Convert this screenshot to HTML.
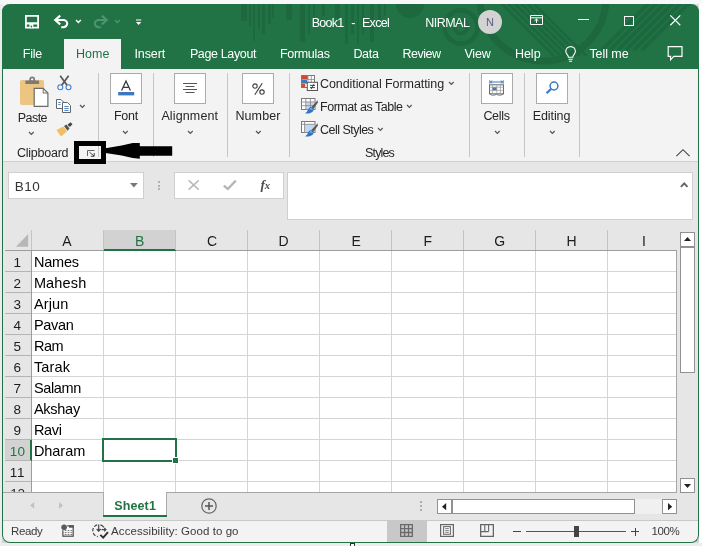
<!DOCTYPE html>
<html><head><meta charset="utf-8"><title>Excel</title>
<style>

*{box-sizing:border-box;margin:0;padding:0}
html,body{width:702px;height:546px;overflow:hidden;background:#f6f6f6;font-family:"Liberation Sans",sans-serif;position:relative}
.a{position:absolute}
.t{position:absolute;white-space:pre;line-height:1}
svg{position:absolute;overflow:visible}
#win{position:absolute;left:2px;top:4px;width:697px;height:539px;background:#f3f3f3;border-radius:8px;overflow:hidden}
#wb{position:absolute;left:2px;top:4px;width:697px;height:539px;border-radius:8px;border:1.5px solid #217346;border-top:none}
.sep{position:absolute;width:1px;background:#c6c6c6;top:73px;height:84px}
.bb{position:absolute;width:32px;height:31px;background:#fff;border:1px solid #ababab;top:73px}
.wbx{position:absolute;background:#fff;border:1px solid #cfcfcf}
.vl{position:absolute;top:251px;width:1px;height:241px;background:#d4d4d4}
.hl{position:absolute;left:32px;height:1px;width:644px;background:#d4d4d4}
.hs{position:absolute;top:230px;width:1px;height:20px;background:#c3c3c3}
.rs{position:absolute;left:5px;width:26px;height:1px;background:#b4b4b4}

</style></head><body>
<div class="a" style="left:0;top:0;width:702px;height:4px;background:#f8f8f8"></div>
<div class="a" style="left:0;top:4px;width:3px;height:542px;background:#ececec"></div>
<div class="a" style="left:699px;top:4px;width:3px;height:542px;background:#fff"></div>
<div class="a" style="left:0;top:543px;width:702px;height:3px;background:#ededed"></div>
<div class="a" style="left:350px;top:543px;width:5px;height:5px;background:#fff;border:1px solid #333"></div>
<div class="a" style="left:692px;top:4px;width:7px;height:7px;background:#dcdcdc"></div><div class="a" style="left:2px;top:536px;width:7px;height:7px;background:#d2d2d2"></div><div class="a" style="left:692px;top:536px;width:7px;height:7px;background:#d2d2d2"></div>
<div id="win"></div>
<div class="a" style="left:2px;top:4px;width:697px;height:539px;border-radius:8px;overflow:hidden;will-change:transform"><div class="a" style="left:-2px;top:-4px;width:702px;height:546px">
<div class="a" style="left:0;top:0;width:702px;height:69px;background:#217346"></div>
<svg class="a" style="left:0;top:0" width="702" height="69" viewBox="0 0 702 69"><g fill="#1d683e" stroke="none"><rect x="241" y="4" width="6" height="17"/><rect x="249" y="4" width="2" height="22"/><rect x="253" y="4" width="2" height="37"/><rect x="258" y="4" width="2" height="25"/><rect x="262" y="4" width="3" height="30"/><rect x="268" y="4" width="3" height="20"/><rect x="272" y="4" width="2" height="14"/><rect x="286" y="4" width="6" height="16"/><rect x="300" y="4" width="5" height="38"/><rect x="308" y="4" width="2" height="30"/><rect x="313" y="4" width="2" height="16"/><rect x="322" y="4" width="3" height="12"/><rect x="335" y="4" width="5" height="14"/><rect x="345" y="4" width="3" height="40"/><rect x="351" y="4" width="3" height="30"/><rect x="357" y="4" width="2" height="40"/><rect x="362" y="4" width="2" height="30"/><rect x="370" y="4" width="4" height="38"/><rect x="378" y="4" width="3" height="18"/><rect x="384" y="4" width="2" height="12"/><circle cx="410" cy="4" r="14"/></g><g fill="none" stroke="#1d683e"><circle cx="461" cy="27" r="16.5" stroke-width="4.5"/><circle cx="461" cy="27" r="6.5" stroke-width="4"/><circle cx="543" cy="-2" r="63" stroke-width="7"/><path d="M498.0 0 L554.0 56" stroke-width="2.6"/><path d="M504.5 0 L560.5 56" stroke-width="2.6"/><path d="M511.0 0 L567.0 56" stroke-width="2.6"/><path d="M517.5 0 L573.5 56" stroke-width="2.6"/><path d="M524.0 0 L580.0 56" stroke-width="2.6"/><path d="M530.5 0 L586.5 56" stroke-width="2.6"/><path d="M652 0 L602 50" stroke-width="3.8"/><path d="M660 0 L610 50" stroke-width="3.8"/><path d="M668 0 L618 50" stroke-width="3.8"/><path d="M676 0 L626 50" stroke-width="3.8"/><path d="M684 0 L634 50" stroke-width="3.8"/><path d="M692 0 L642 50" stroke-width="3.8"/></g></svg>
<div class="a" style="left:64px;top:39px;width:57px;height:31px;background:#f3f3f3"></div>
<div class="a" style="left:0;top:69px;width:702px;height:93px;background:#f3f3f3;border-bottom:1px solid #d0d0d0"></div>
<div class="a" style="left:0;top:162px;width:702px;height:359px;background:#e6e6e6"></div>
<svg class="a" style="left:25px;top:15px" width="14" height="13.6" viewBox="0 0 14 13.6"><path d="M0.9 0.9 H13.1 V12.7 H0.9 Z" fill="none" stroke="#fff" stroke-width="1.8"/><path d="M0.9 8.3 H13.1" stroke="#fff" stroke-width="2.3"/><rect x="4.4" y="9" width="3.9" height="4.2" fill="#fff"/><rect x="5.7" y="10.6" width="1.4" height="1.8" fill="#217346"/></svg>
<svg class="a" style="left:54px;top:15px" width="15" height="13" viewBox="0 0 15 13"><path d="M6.2 0.6 L1.2 5 L6.2 9.4 M1.5 5 H9.2 A4 3.6 0 0 1 9.2 12.2 H7.2" fill="none" stroke="#fff" stroke-width="2.1"/></svg>
<svg class="a" style="left:75.8px;top:19.8px" width="4.8" height="2.5" viewBox="0 0 4.8 2.5"><path d="M0 0 L2.4 2.5 L4.8 0" fill="none" stroke="#fff" stroke-width="1.4"/></svg>
<svg class="a" style="left:92.5px;top:15px" width="15" height="13" viewBox="0 0 15 13"><path d="M8.8 0.6 L13.8 5 L8.8 9.4 M13.5 5 H5.8 A4 3.6 0 0 0 5.8 12.2 H7.8" fill="none" stroke="#4f9470" stroke-width="2.1"/></svg>
<svg class="a" style="left:115px;top:19.8px" width="4.8" height="2.5" viewBox="0 0 4.8 2.5"><path d="M0 0 L2.4 2.5 L4.8 0" fill="none" stroke="#4f9470" stroke-width="1.4"/></svg>
<svg class="a" style="left:135.9px;top:19px" width="5.3" height="6.5" viewBox="0 0 6 6.5"><path d="M0 0.7 H6" stroke="#fff" stroke-width="1.3"/><path d="M0 3 H6 L3 6.3 Z" fill="#fff"/></svg>
<div class="a" style="left:478px;top:10px;width:24px;height:24px;border-radius:50%;background:#d3d3d3"></div>
<svg class="a" style="left:529.8px;top:15.2px" width="13" height="10" viewBox="0 0 13 10"><path d="M0.5 0.5 H12.5 V9.5 H0.5 Z M0.5 2.8 H12.5" fill="none" stroke="#fff" stroke-width="1"/><path d="M6.5 8 V4.2 M4.6 5.8 L6.5 4 L8.4 5.8" fill="none" stroke="#fff" stroke-width="1"/></svg>
<div class="a" style="left:577.5px;top:19px;width:11px;height:1.2px;background:#fff"></div>
<div class="a" style="left:623.5px;top:15.5px;width:10.5px;height:10.5px;border:1.2px solid #fff"></div>
<svg class="a" style="left:669.5px;top:14.8px" width="10.6" height="10.6" viewBox="0 0 10.6 10.6"><path d="M0.3 0.3 L10.3 10.3 M10.3 0.3 L0.3 10.3" stroke="#fff" stroke-width="1.2"/></svg>
<svg class="a" style="left:564.8px;top:45.6px" width="11.2" height="16" viewBox="0 0 11 16"><path d="M3.3 11.2 C3.3 9 0.7 8 0.7 5.2 A4.8 4.6 0 0 1 10.3 5.2 C10.3 8 7.7 9 7.7 11.2 Z M3.4 13.3 H7.6 M4 15.3 H7" fill="none" stroke="#fff" stroke-width="1.1"/></svg>
<svg class="a" style="left:666.8px;top:45.6px" width="16.2" height="15" viewBox="0 0 15 15"><path d="M0.6 0.6 H14.4 V10.4 H6.2 L3 13.8 V10.4 H0.6 Z" fill="none" stroke="#fff" stroke-width="1.2"/></svg>
<div class="sep" style="left:98px"></div>
<div class="sep" style="left:153px"></div>
<div class="sep" style="left:227px"></div>
<div class="sep" style="left:289px"></div>
<div class="sep" style="left:469px"></div>
<div class="sep" style="left:524px"></div>
<div class="sep" style="left:579px"></div>
<div class="bb" style="left:110px"></div>
<div class="bb" style="left:174px"></div>
<div class="bb" style="left:242px"></div>
<div class="bb" style="left:481px"></div>
<div class="bb" style="left:536px"></div>
<svg class="a" style="left:29.3px;top:131.5px" width="4.7" height="2.5" viewBox="0 0 4.7 2.5"><path d="M0 0 L2.35 2.5 L4.7 0" fill="none" stroke="#555" stroke-width="1.2"/></svg>
<svg class="a" style="left:80.3px;top:105.1px" width="4.7" height="2.5" viewBox="0 0 4.7 2.5"><path d="M0 0 L2.35 2.5 L4.7 0" fill="none" stroke="#555" stroke-width="1.2"/></svg>
<svg class="a" style="left:123.3px;top:130.5px" width="4.7" height="2.5" viewBox="0 0 4.7 2.5"><path d="M0 0 L2.35 2.5 L4.7 0" fill="none" stroke="#555" stroke-width="1.2"/></svg>
<svg class="a" style="left:187.8px;top:130.5px" width="4.7" height="2.5" viewBox="0 0 4.7 2.5"><path d="M0 0 L2.35 2.5 L4.7 0" fill="none" stroke="#555" stroke-width="1.2"/></svg>
<svg class="a" style="left:255.5px;top:130.5px" width="4.7" height="2.5" viewBox="0 0 4.7 2.5"><path d="M0 0 L2.35 2.5 L4.7 0" fill="none" stroke="#555" stroke-width="1.2"/></svg>
<svg class="a" style="left:494.8px;top:130.5px" width="4.7" height="2.5" viewBox="0 0 4.7 2.5"><path d="M0 0 L2.35 2.5 L4.7 0" fill="none" stroke="#555" stroke-width="1.2"/></svg>
<svg class="a" style="left:549.8px;top:130.5px" width="4.7" height="2.5" viewBox="0 0 4.7 2.5"><path d="M0 0 L2.35 2.5 L4.7 0" fill="none" stroke="#555" stroke-width="1.2"/></svg>
<svg class="a" style="left:448.7px;top:82.3px" width="4.7" height="2.5" viewBox="0 0 4.7 2.5"><path d="M0 0 L2.35 2.5 L4.7 0" fill="none" stroke="#555" stroke-width="1.2"/></svg>
<svg class="a" style="left:406.90000000000003px;top:105.3px" width="4.7" height="2.5" viewBox="0 0 4.7 2.5"><path d="M0 0 L2.35 2.5 L4.7 0" fill="none" stroke="#555" stroke-width="1.2"/></svg>
<svg class="a" style="left:378.0px;top:128.3px" width="4.7" height="2.5" viewBox="0 0 4.7 2.5"><path d="M0 0 L2.35 2.5 L4.7 0" fill="none" stroke="#555" stroke-width="1.2"/></svg>
<svg class="a" style="left:675.5px;top:148.8px" width="14" height="7.5" viewBox="0 0 14 7.5"><path d="M0.4 7.2 L7 0.7 L13.6 7.2" fill="none" stroke="#444" stroke-width="1.1"/></svg>
<svg class="a" style="left:20px;top:76px" width="29" height="32" viewBox="0 0 29 32"><rect x="0" y="4" width="24.1" height="25" rx="2" fill="#ecc583"/><circle cx="12.2" cy="3.4" r="2.1" fill="none" stroke="#7a7a7a" stroke-width="1.7"/><rect x="5.3" y="4.4" width="13.8" height="3.5" rx="0.6" fill="#7a7a7a"/><path d="M14.2 12.3 H23.2 L27.9 17 V30.4 H14.2 Z" fill="#fff" stroke="#6a6a6a" stroke-width="1.2"/><path d="M23.2 12.3 V17 H27.9" fill="none" stroke="#6a6a6a" stroke-width="1"/></svg>
<svg class="a" style="left:57px;top:75px" width="15" height="16" viewBox="0 0 15 16"><path d="M3.2 0.8 L10.6 11 M11.6 0.8 L4.2 11" stroke="#5a5a5a" stroke-width="1.8" fill="none"/><circle cx="3.3" cy="12.3" r="2.5" fill="#f3f3f3" stroke="#3f7fc8" stroke-width="1.1"/><circle cx="11.5" cy="12.3" r="2.5" fill="#f3f3f3" stroke="#3f7fc8" stroke-width="1.1"/></svg>
<svg class="a" style="left:56px;top:99px" width="16" height="14" viewBox="0 0 16 14"><path d="M0.5 0.5 H5 L7.5 3 V9.5 H0.5 Z" fill="#fff" stroke="#666" stroke-width="1"/><path d="M6.5 3.5 H11.5 L14.5 6.5 V13.5 H6.5 Z" fill="#fff" stroke="#666" stroke-width="1"/><path d="M8.3 7.5 H12.7 M8.3 9.5 H12.7 M8.3 11.5 H12.7 M2.2 3.5 H4.6 M2.2 5.5 H4.6" stroke="#3f7fc8" stroke-width="0.9"/></svg>
<svg class="a" style="left:56px;top:121.5px" width="17" height="15" viewBox="0 0 17 15"><path d="M0.5 8 L7.5 4.5 L11 9.5 L5 14.5 Z" fill="#f0c060"/><path d="M8 4 L10.5 2.5 L13.5 6.5 L11.5 8.8 Z" fill="#555"/><path d="M11.5 2.8 L14.5 0.3 L16.5 2.2 L13.8 5 Z" fill="#444"/></svg>
<svg class="a" style="left:118px;top:80px" width="17" height="17" viewBox="0 0 17 17"><path d="M3.6 10.6 L8 1 L12.4 10.6 M5.2 7.3 H10.8" fill="none" stroke="#3a3a3a" stroke-width="1.3"/><rect x="0.2" y="12" width="16" height="3.4" fill="#3b78c4"/></svg>
<svg class="a" style="left:182.5px;top:83px" width="14" height="10" viewBox="0 0 14 10"><path d="M0 0.5 H14 M2.5 3.5 H11.5 M0 6.5 H14 M2.5 9.5 H11.5" stroke="#555" stroke-width="1"/></svg>
<svg class="a" style="left:87px;top:150px" width="8.5" height="7" viewBox="0 0 8.5 7"><path d="M0.5 6 V0.5 H7.5" fill="none" stroke="#666" stroke-width="1"/><path d="M2.5 2.2 L7 6 M7.2 3 V6.3 H3.8" fill="none" stroke="#444" stroke-width="1"/></svg>
<div class="a" style="left:74px;top:141px;width:32px;height:23px;border:5px solid #000"></div>
<svg class="a" style="left:0;top:0" width="702" height="546" viewBox="0 0 702 546"><path d="M105.5 148.2 L121.7 145.6 L132.7 143 L139.8 142.9 L139.8 146.2 L172.2 146.2 L172.2 155.7 L139.8 155.7 L139.8 158.8 L132.7 158.1 L121.7 155.6 L105.5 153 Z" fill="#000"/></svg>
<svg class="a" style="left:301px;top:75px" width="17" height="16" viewBox="0 0 17 16"><rect x="0.5" y="0.5" width="13" height="12" fill="#fff" stroke="#7a7a7a" stroke-width="1"/><path d="M7 0.5 V7.5 M10.3 0.5 V7.5 M0.5 4.5 H13.5 M0.5 8.5 H7" stroke="#8a8a8a" stroke-width="0.8"/><rect x="1" y="1" width="5.8" height="3" fill="#d24a2c"/><rect x="1" y="5" width="5" height="3" fill="#3b78c4"/><rect x="1" y="9" width="3.2" height="3" fill="#d24a2c"/><rect x="6.3" y="7.3" width="10.2" height="8.2" fill="#fff" stroke="#555" stroke-width="1"/><path d="M9 10.4 H14 M9 12.6 H14 M13 8.9 L10.2 14.2" stroke="#333" stroke-width="0.9"/></svg>
<svg class="a" style="left:301px;top:98px" width="17" height="16" viewBox="0 0 17 16"><rect x="0.5" y="0.5" width="13.5" height="11" fill="#fff" stroke="#7a7a7a" stroke-width="1"/><rect x="5" y="4.2" width="8.5" height="7" fill="#c3d8f0"/><path d="M0.5 4 H14 M0.5 7.7 H14 M4.8 0.5 V11.5 M9.4 0.5 V11.5" stroke="#8a8a8a" stroke-width="0.9"/><path d="M16.6 2.2 L16.9 4.6 L12.6 10.8 L10.2 9.2 Z" fill="#5a5a5a"/><path d="M12.6 11 C12.8 14.6 8.5 16 4 15.3 C6.6 14.2 6.6 12.2 7.6 10.6 C9 8.6 12.2 9.2 12.6 11 Z" fill="#2f74c8"/><path d="M8.8 11.2 C9.6 10.4 10.8 10.6 11.2 11.6" stroke="#cfe0f5" stroke-width="0.9" fill="none"/></svg>
<svg class="a" style="left:301px;top:121px" width="17" height="16" viewBox="0 0 17 16"><rect x="0.5" y="0.5" width="13.5" height="11" fill="#fff" stroke="#7a7a7a" stroke-width="1"/><rect x="4" y="3.6" width="9.5" height="7.6" fill="#c3d8f0"/><path d="M0.5 3.3 H14 M3.6 0.5 V11.5" stroke="#8a8a8a" stroke-width="0.9"/><path d="M16.6 2.2 L16.9 4.6 L12.6 10.8 L10.2 9.2 Z" fill="#5a5a5a"/><path d="M12.6 11 C12.8 14.6 8.5 16 4 15.3 C6.6 14.2 6.6 12.2 7.6 10.6 C9 8.6 12.2 9.2 12.6 11 Z" fill="#2f74c8"/><path d="M8.8 11.2 C9.6 10.4 10.8 10.6 11.2 11.6" stroke="#cfe0f5" stroke-width="0.9" fill="none"/></svg>
<svg class="a" style="left:251.5px;top:82.5px" width="13" height="12" viewBox="0 0 13 12"><circle cx="3" cy="3" r="2.2" fill="none" stroke="#444" stroke-width="1.15"/><circle cx="10" cy="9" r="2.2" fill="none" stroke="#444" stroke-width="1.15"/><path d="M10.2 0.3 L2.8 11.7" stroke="#444" stroke-width="1.15"/></svg>
<svg class="a" style="left:489px;top:79.5px" width="15" height="16" viewBox="0 0 15 16"><path d="M0.8 0.3 V3.7 M14.2 0.3 V3.7 M1 2 H14" stroke="#3b78c4" stroke-width="1"/><path d="M3.3 0.6 L1.6 2 L3.3 3.4 M11.7 0.6 L13.4 2 L11.7 3.4" fill="none" stroke="#3b78c4" stroke-width="0.9"/><rect x="0.5" y="4.8" width="14" height="9" fill="#fff" stroke="#6a6a6a" stroke-width="1"/><rect x="3.4" y="7.2" width="4.4" height="3.2" fill="#3b78c4"/><path d="M0.5 7.2 H14.5 M0.5 10.4 H14.5 M3.4 4.8 V13.8 M7.8 4.8 V13.8 M11.4 4.8 V13.8" stroke="#9a9a9a" stroke-width="0.7"/><path d="M0.5 13.8 C2.5 15.6 5 15.6 7.5 14.4 C10 15.6 12.5 15.6 14.5 13.8" fill="none" stroke="#6a6a6a" stroke-width="0.9"/></svg>
<svg class="a" style="left:546px;top:81px" width="13" height="13" viewBox="0 0 13 13"><circle cx="8" cy="5" r="3.9" fill="none" stroke="#3b78c4" stroke-width="1.5"/><path d="M5.2 7.8 L0.6 12.2" stroke="#3b78c4" stroke-width="2.2"/></svg>
<div class="wbx" style="left:8.3px;top:172.3px;width:135.3px;height:26.3px"></div>
<svg class="a" style="left:129.6px;top:183px" width="7.8" height="4.4" viewBox="0 0 7.8 4.4"><path d="M0 0 H7.8 L3.9 4.4 Z" fill="#777"/></svg>
<div class="a" style="left:157.8px;top:181px;width:2px;height:2px;background:#b2b2b2"></div>
<div class="a" style="left:157.8px;top:184.7px;width:2px;height:2px;background:#b2b2b2"></div>
<div class="a" style="left:157.8px;top:188.4px;width:2px;height:2px;background:#b2b2b2"></div>
<div class="wbx" style="left:174.3px;top:172.3px;width:110px;height:26.3px"></div>
<svg class="a" style="left:187.6px;top:180.3px" width="11.3" height="10" viewBox="0 0 11.3 10"><path d="M0.6 0.4 L10.7 9.6 M10.7 0.4 L0.6 9.6" stroke="#b9b9b9" stroke-width="1.5"/></svg>
<svg class="a" style="left:222.5px;top:180.3px" width="13.5" height="10" viewBox="0 0 13.5 10"><path d="M0.8 5.6 L4.8 9 L12.8 0.6" fill="none" stroke="#b5b5b5" stroke-width="2.3"/></svg>
<div class="wbx" style="left:287px;top:172px;width:406px;height:48px"></div>
<svg class="a" style="left:680px;top:181.8px" width="8.4" height="5.5" viewBox="0 0 8.4 5.5"><path d="M0.9 4.9 L4.2 1.4 L7.5 4.9" fill="none" stroke="#666" stroke-width="2"/></svg>
<div class="a" style="left:32px;top:251px;width:644.5px;height:241px;background:#fff"></div>
<div class="a" style="left:104px;top:230px;width:72px;height:19px;background:#d2d2d2"></div>
<div class="a" style="left:104px;top:248.6px;width:72px;height:2.2px;background:#217346"></div>
<div class="a" style="left:5px;top:250px;width:672px;height:1px;background:#9c9c9c"></div>
<div class="a" style="left:104px;top:249px;width:72px;height:2px;background:#217346"></div>
<svg class="a" style="left:15.5px;top:234px" width="12.2" height="12.8" viewBox="0 0 12.2 12.8"><path d="M12.2 0 V12.8 H0 Z" fill="#b7b7b7"/></svg>
<div class="hs" style="left:31px"></div>
<div class="hs" style="left:103px"></div>
<div class="hs" style="left:175px"></div>
<div class="hs" style="left:247px"></div>
<div class="hs" style="left:319px"></div>
<div class="hs" style="left:391px"></div>
<div class="hs" style="left:463px"></div>
<div class="hs" style="left:535px"></div>
<div class="hs" style="left:607px"></div>
<div class="a" style="left:31px;top:251px;width:1px;height:241px;background:#9c9c9c"></div>
<div class="a" style="left:5px;top:440px;width:26px;height:21px;background:#d2d2d2"></div>
<div class="a" style="left:30px;top:440px;width:2px;height:21px;background:#217346"></div>
<div class="vl" style="left:103px"></div>
<div class="vl" style="left:175px"></div>
<div class="vl" style="left:247px"></div>
<div class="vl" style="left:319px"></div>
<div class="vl" style="left:391px"></div>
<div class="vl" style="left:463px"></div>
<div class="vl" style="left:535px"></div>
<div class="vl" style="left:607px"></div>
<div class="hl" style="top:271px"></div>
<div class="rs" style="top:271px"></div>
<div class="hl" style="top:292px"></div>
<div class="rs" style="top:292px"></div>
<div class="hl" style="top:313px"></div>
<div class="rs" style="top:313px"></div>
<div class="hl" style="top:334px"></div>
<div class="rs" style="top:334px"></div>
<div class="hl" style="top:355px"></div>
<div class="rs" style="top:355px"></div>
<div class="hl" style="top:376px"></div>
<div class="rs" style="top:376px"></div>
<div class="hl" style="top:397px"></div>
<div class="rs" style="top:397px"></div>
<div class="hl" style="top:418px"></div>
<div class="rs" style="top:418px"></div>
<div class="hl" style="top:439px"></div>
<div class="rs" style="top:439px"></div>
<div class="hl" style="top:460px"></div>
<div class="rs" style="top:460px"></div>
<div class="hl" style="top:481px"></div>
<div class="rs" style="top:481px"></div>
<div class="a" style="left:676px;top:251px;width:1px;height:242px;background:#a6a6a6"></div>
<div class="a" style="left:102px;top:438px;width:75px;height:24px;border:2px solid #217346"></div>
<div class="a" style="left:172px;top:457px;width:7px;height:7px;background:#fff"></div>
<div class="a" style="left:173px;top:458px;width:5px;height:5px;background:#217346"></div>
<div class="a" style="left:5px;top:482px;width:26px;height:10px;overflow:hidden"><div class="t" style="left:5.2px;top:5px;font-size:13.5px;color:#262626;letter-spacing:-0.3px">12</div></div>
<div class="a" style="left:680px;top:232px;width:15px;height:15px;background:#fff;border:1px solid #919191"></div>
<svg class="a" style="left:684px;top:237.3px" width="7" height="4" viewBox="0 0 7 4"><path d="M0 4 H7 L3.5 0 Z" fill="#222"/></svg>
<div class="a" style="left:680px;top:247px;width:15px;height:126px;background:#fff;border:1px solid #919191"></div>
<div class="a" style="left:680px;top:478px;width:15px;height:15px;background:#fff;border:1px solid #919191"></div>
<svg class="a" style="left:684px;top:483.6px" width="7" height="4" viewBox="0 0 7 4"><path d="M0 0 H7 L3.5 4 Z" fill="#222"/></svg>
<div class="a" style="left:0;top:492px;width:677px;height:1px;background:#a6a6a6"></div>
<div class="a" style="left:103.3px;top:492px;width:64.2px;height:24.5px;background:#fff;border-left:1px solid #ababab;border-right:1px solid #ababab"></div>
<div class="a" style="left:103.3px;top:514.5px;width:64.2px;height:2.2px;background:#217346"></div>
<svg class="a" style="left:29.6px;top:502px" width="4.2" height="6.8" viewBox="0 0 4.2 6.8"><path d="M4.2 0 V6.8 L0 3.4 Z" fill="#c2c2c2"/></svg>
<svg class="a" style="left:58.8px;top:502px" width="4.2" height="6.8" viewBox="0 0 4.2 6.8"><path d="M0 0 V6.8 L4.2 3.4 Z" fill="#c2c2c2"/></svg>
<svg class="a" style="left:201px;top:498px" width="16" height="16" viewBox="0 0 16 16"><circle cx="8" cy="8" r="7.2" fill="none" stroke="#666" stroke-width="1.25"/><path d="M8 4 V12 M4 8 H12" stroke="#555" stroke-width="1.5"/></svg>
<div class="a" style="left:420px;top:501px;width:2px;height:2px;background:#adadad"></div>
<div class="a" style="left:420px;top:505px;width:2px;height:2px;background:#adadad"></div>
<div class="a" style="left:420px;top:509px;width:2px;height:2px;background:#adadad"></div>
<div class="a" style="left:437px;top:499px;width:15px;height:15px;background:#fff;border:1px solid #919191"></div>
<svg class="a" style="left:442px;top:502.8px" width="4.2" height="7.4" viewBox="0 0 4 7"><path d="M4 0 V7 L0 3.5 Z" fill="#222"/></svg>
<div class="a" style="left:452px;top:499px;width:183px;height:15px;background:#fff;border:1px solid #919191"></div>
<div class="a" style="left:635px;top:499px;width:27px;height:15px;background:#f0f0f0"></div>
<div class="a" style="left:662px;top:499px;width:15px;height:15px;background:#fff;border:1px solid #919191"></div>
<svg class="a" style="left:667.8px;top:502.8px" width="4.2" height="7.4" viewBox="0 0 4 7"><path d="M0 0 V7 L4 3.5 Z" fill="#222"/></svg>
<div class="a" style="left:0;top:520px;width:702px;height:23px;background:#f3f3f3;border-top:1px solid #c8c8c8"></div>
<div class="a" style="left:387px;top:521px;width:40px;height:21px;background:#c8c8c8"></div>
<svg class="a" style="left:61px;top:524px" width="13" height="13" viewBox="0 0 13 13"><rect x="1.9" y="1.9" width="10.3" height="10.3" fill="#fdfdfd" stroke="#555" stroke-width="1.3"/><rect x="8" y="1.3" width="4.8" height="2.4" fill="#555"/><circle cx="3.1" cy="3.2" r="3.3" fill="#f3f3f3"/><circle cx="3.1" cy="3.2" r="2.8" fill="#5a5a5a"/><path d="M3.7 6.6 H5.5 M6.6 6.6 H8.4 M9.5 6.6 H11.2 M3.7 8.6 H5.5 M6.6 8.6 H8.4 M9.5 8.6 H11.2 M3.7 10.5 H5.5 M6.6 10.5 H8.4 M9.5 10.5 H11.2" stroke="#666" stroke-width="0.9"/></svg>
<svg class="a" style="left:91.7px;top:524px" width="17" height="15" viewBox="0 0 17 15"><path d="M5.2 0.9 A6 6 0 0 0 5.8 12.6" fill="none" stroke="#444" stroke-width="1.2" stroke-dasharray="3.4 1.6"/><path d="M8.4 0.9 A6 6 0 0 1 11.8 3.4" fill="none" stroke="#444" stroke-width="1.2"/><path d="M6.7 0.5 V7 M4.7 5 L6.7 7.2 L8.7 5" fill="none" stroke="#444" stroke-width="1.2"/><path d="M9.6 5.6 H13.8 M12.2 3.8 L14 5.6 L12.2 7.4" fill="none" stroke="#444" stroke-width="1.1"/><path d="M8.3 10.8 L11.2 13.7 L16 8.2" fill="none" stroke="#333" stroke-width="1.9"/></svg>
<svg class="a" style="left:400px;top:524px" width="13" height="13" viewBox="0 0 13 13"><path d="M0.65 0.65 H12.35 V12.35 H0.65 Z M0.65 4.6 H12.35 M0.65 8.5 H12.35 M4.6 0.65 V12.35 M8.5 0.65 V12.35" fill="none" stroke="#6a6a6a" stroke-width="1.3"/></svg>
<svg class="a" style="left:440px;top:524px" width="14" height="13" viewBox="0 0 14 13"><rect x="0.6" y="0.6" width="12.8" height="11.8" fill="none" stroke="#666" stroke-width="1.2"/><rect x="3.6" y="2.6" width="6.8" height="7.7" fill="none" stroke="#666" stroke-width="1"/><path d="M5.3 4.5 H8.8 M5.3 6.5 H8.8 M5.3 8.4 H8.8" stroke="#666" stroke-width="0.8"/></svg>
<svg class="a" style="left:480px;top:524px" width="14" height="13" viewBox="0 0 14 13"><path d="M0.65 0.65 H13.35 V12.35 H0.65 Z" fill="none" stroke="#666" stroke-width="1.3"/><path d="M4.8 0.6 V7.6 M8.6 0.6 V7.6 M0.6 7.6 H8.6" fill="none" stroke="#666" stroke-width="1.1"/></svg>
<div class="a" style="left:513px;top:531px;width:8px;height:1px;background:#444"></div>
<div class="a" style="left:525.6px;top:531px;width:100px;height:1px;background:#555"></div>
<div class="a" style="left:574.4px;top:526px;width:4.6px;height:11px;background:#444"></div>
<div class="a" style="left:631px;top:531px;width:8px;height:1px;background:#444"></div>
<div class="a" style="left:634.5px;top:527.5px;width:1px;height:8px;background:#444"></div>
<div class="t" style="left:311.68px;top:17.00px;font-size:12.5px;color:#fff;letter-spacing:-0.701px">Book1</div>
<div class="t" style="left:351.18px;top:17.00px;font-size:12.5px;color:#fff;letter-spacing:1.200px">-</div>
<div class="t" style="left:361.98px;top:17.00px;font-size:12.5px;color:#fff;letter-spacing:-0.686px">Excel</div>
<div class="t" style="left:425.18px;top:17.00px;font-size:12.5px;color:#fff;letter-spacing:-0.497px">NIRMAL</div>
<div class="t" style="left:485.95px;top:17.00px;font-size:11px;color:#5b5b86;letter-spacing:1.147px">N</div>
<div class="t" style="left:22.77px;top:48.00px;font-size:12.5px;color:#fff;letter-spacing:-0.252px">File</div>
<div class="t" style="left:75.88px;top:48.00px;font-size:12.5px;color:#217346;letter-spacing:0.102px">Home</div>
<div class="t" style="left:134.38px;top:48.00px;font-size:12.5px;color:#fff;letter-spacing:-0.086px">Insert</div>
<div class="t" style="left:189.88px;top:48.00px;font-size:12.5px;color:#fff;letter-spacing:-0.359px">Page Layout</div>
<div class="t" style="left:279.88px;top:48.00px;font-size:12.5px;color:#fff;letter-spacing:-0.293px">Formulas</div>
<div class="t" style="left:353.38px;top:48.00px;font-size:12.5px;color:#fff;letter-spacing:-0.289px">Data</div>
<div class="t" style="left:402.38px;top:48.00px;font-size:12.5px;color:#fff;letter-spacing:-0.458px">Review</div>
<div class="t" style="left:464.38px;top:48.00px;font-size:12.5px;color:#fff;letter-spacing:-0.156px">View</div>
<div class="t" style="left:514.88px;top:48.00px;font-size:12.5px;color:#fff;letter-spacing:0.008px">Help</div>
<div class="t" style="left:589.38px;top:48.00px;font-size:12.5px;color:#fff;letter-spacing:-0.049px">Tell me</div>
<div class="t" style="left:17.68px;top:112.00px;font-size:12.5px;color:#262626;letter-spacing:-0.524px">Paste</div>
<div class="t" style="left:16.88px;top:147.00px;font-size:12.5px;color:#262626;letter-spacing:-0.230px">Clipboard</div>
<div class="t" style="left:113.88px;top:110.00px;font-size:12.5px;color:#262626;letter-spacing:-0.241px">Font</div>
<div class="t" style="left:161.38px;top:110.00px;font-size:12.5px;color:#262626;letter-spacing:0.140px">Alignment</div>
<div class="t" style="left:235.38px;top:110.00px;font-size:12.5px;color:#262626;letter-spacing:0.130px">Number</div>
<div class="t" style="left:483.38px;top:110.00px;font-size:12.5px;color:#262626;letter-spacing:-0.309px">Cells</div>
<div class="t" style="left:532.77px;top:110.00px;font-size:12.5px;color:#262626;letter-spacing:-0.098px">Editing</div>
<div class="t" style="left:319.98px;top:78.00px;font-size:12.5px;color:#262626;letter-spacing:-0.078px">Conditional Formatting</div>
<div class="t" style="left:319.98px;top:101.00px;font-size:12.5px;color:#262626;letter-spacing:-0.450px">Format as Table</div>
<div class="t" style="left:319.98px;top:124.00px;font-size:12.5px;color:#262626;letter-spacing:-0.518px">Cell Styles</div>
<div class="t" style="left:365.07px;top:147.00px;font-size:12.5px;color:#262626;letter-spacing:-0.866px">Styles</div>
<div class="t" style="left:14.82px;top:180.00px;font-size:13.5px;color:#333;letter-spacing:0.473px">B10</div>
<div class="t" style="left:62.30px;top:234.00px;font-size:14px;color:#1c1c1c;letter-spacing:1.056px">A</div>
<div class="t" style="left:135.05px;top:234.00px;font-size:14px;color:#217346;letter-spacing:-0.444px">B</div>
<div class="t" style="left:207.05px;top:234.00px;font-size:14px;color:#1c1c1c;letter-spacing:-1.200px">C</div>
<div class="t" style="left:278.55px;top:234.00px;font-size:14px;color:#1c1c1c;letter-spacing:-0.225px">D</div>
<div class="t" style="left:351.55px;top:234.00px;font-size:14px;color:#1c1c1c;letter-spacing:-1.200px">E</div>
<div class="t" style="left:423.55px;top:234.00px;font-size:14px;color:#1c1c1c;letter-spacing:-0.662px">F</div>
<div class="t" style="left:494.30px;top:234.00px;font-size:14px;color:#1c1c1c;letter-spacing:-0.491px">G</div>
<div class="t" style="left:566.55px;top:234.00px;font-size:14px;color:#1c1c1c;letter-spacing:-0.225px">H</div>
<div class="t" style="left:642.10px;top:234.00px;font-size:14px;color:#1c1c1c;letter-spacing:-0.491px">I</div>
<div class="t" style="left:13.57px;top:256.00px;font-size:13.5px;color:#1c1c1c;letter-spacing:0.334px">1</div>
<div class="t" style="left:13.57px;top:277.00px;font-size:13.5px;color:#1c1c1c;letter-spacing:0.334px">2</div>
<div class="t" style="left:13.57px;top:298.00px;font-size:13.5px;color:#1c1c1c;letter-spacing:0.334px">3</div>
<div class="t" style="left:13.57px;top:319.00px;font-size:13.5px;color:#1c1c1c;letter-spacing:0.334px">4</div>
<div class="t" style="left:13.57px;top:340.00px;font-size:13.5px;color:#1c1c1c;letter-spacing:0.334px">5</div>
<div class="t" style="left:13.57px;top:361.00px;font-size:13.5px;color:#1c1c1c;letter-spacing:0.334px">6</div>
<div class="t" style="left:13.57px;top:382.00px;font-size:13.5px;color:#1c1c1c;letter-spacing:0.334px">7</div>
<div class="t" style="left:13.57px;top:403.00px;font-size:13.5px;color:#1c1c1c;letter-spacing:0.334px">8</div>
<div class="t" style="left:13.57px;top:424.00px;font-size:13.5px;color:#1c1c1c;letter-spacing:0.334px">9</div>
<div class="t" style="left:9.82px;top:445.00px;font-size:13.5px;color:#217346;letter-spacing:0.159px">10</div>
<div class="t" style="left:9.82px;top:466.00px;font-size:13.5px;color:#1c1c1c;letter-spacing:0.667px">11</div>
<div class="t" style="left:33.88px;top:255.00px;font-size:14.5px;color:#000;letter-spacing:-0.177px">Names</div>
<div class="t" style="left:33.88px;top:276.00px;font-size:14.5px;color:#000;letter-spacing:0.159px">Mahesh</div>
<div class="t" style="left:33.88px;top:297.00px;font-size:14.5px;color:#000;letter-spacing:0.138px">Arjun</div>
<div class="t" style="left:33.88px;top:318.00px;font-size:14.5px;color:#000;letter-spacing:-0.315px">Pavan</div>
<div class="t" style="left:33.88px;top:339.00px;font-size:14.5px;color:#000;letter-spacing:-0.458px">Ram</div>
<div class="t" style="left:33.88px;top:360.00px;font-size:14.5px;color:#000;letter-spacing:0.176px">Tarak</div>
<div class="t" style="left:33.88px;top:381.00px;font-size:14.5px;color:#000;letter-spacing:-0.354px">Salamn</div>
<div class="t" style="left:33.88px;top:402.00px;font-size:14.5px;color:#000;letter-spacing:-0.252px">Akshay</div>
<div class="t" style="left:33.88px;top:423.00px;font-size:14.5px;color:#000;letter-spacing:-0.291px">Ravi</div>
<div class="t" style="left:33.88px;top:444.00px;font-size:14.5px;color:#000;letter-spacing:-0.038px">Dharam</div>
<div class="t" style="left:114.17px;top:500.00px;font-size:12.5px;color:#217346;letter-spacing:0.142px;font-weight:bold">Sheet1</div>
<div class="t" style="left:11.12px;top:526.00px;font-size:11.5px;color:#3b3b3b;letter-spacing:-0.420px">Ready</div>
<div class="t" style="left:111.12px;top:526.00px;font-size:11.5px;color:#3b3b3b;letter-spacing:0.061px">Accessibility: Good to go</div>
<div class="t" style="left:651.62px;top:526.00px;font-size:11.5px;color:#3b3b3b;letter-spacing:-0.393px">100%</div>
<div class="t" style="left:260.5px;top:177.5px;font-family:'Liberation Serif',serif;font-style:italic;font-weight:bold;font-size:13.5px;color:#4a4a4a;letter-spacing:-0.3px">f<span style="font-size:10.5px">x</span></div></div></div><div id="wb"></div>
</body></html>
